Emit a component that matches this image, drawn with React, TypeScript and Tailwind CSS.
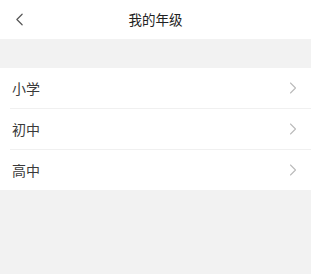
import { ChevronLeft, ChevronRight } from 'lucide-react';

const grades = ['小学', '初中', '高中'];

export default function App() {
  return (
    <div
      className="w-[311px] h-[274px] bg-[#f2f2f2] flex flex-col"
      style={{ fontFamily: '"Noto Sans CJK SC", "Noto Sans", sans-serif' }}
    >
      <div className="h-[39px] bg-white flex items-center relative shrink-0">
        <button className="pl-[9px] text-[#555] flex items-center">
          <ChevronLeft className="w-[21px] h-[21px]" strokeWidth={1.4} />
        </button>
        <h1 className="absolute left-0 right-0 text-center text-[13.5px] text-[#222] pointer-events-none">
          我的年级
        </h1>
      </div>

      <div className="h-[29px] shrink-0" />

      <div className="bg-white">
        {grades.map((g, i) => (
          <div key={g}>
            {i > 0 && <div className="ml-[10px] h-px bg-[#f0f0f0]" />}
            <div className="h-[40px] flex items-center justify-between pl-[12px] pr-[8px]">
              <span className="text-[14px] text-[#3a3a3a]">{g}</span>
              <ChevronRight className="w-[20px] h-[20px] text-[#bbb]" strokeWidth={1.3} />
            </div>
          </div>
        ))}
      </div>
    </div>
  );
}
